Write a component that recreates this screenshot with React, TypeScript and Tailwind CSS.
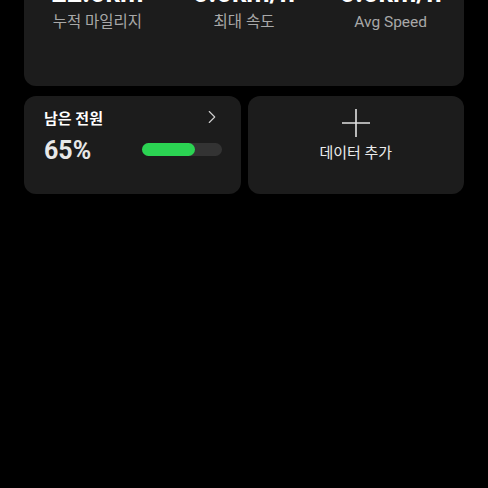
import { ChevronRight } from 'lucide-react'

const stats = [
  { value: '22.0km', label: '누적 마일리지' },
  { value: '0.0km/h', label: '최대 속도' },
  { value: '0.0km/h', label: 'Avg Speed' },
]

export default function App() {
  const battery = 65

  return (
    <div
      className="w-[488px] h-[488px] bg-black overflow-hidden"
      style={{ fontFamily: "Roboto, 'Noto Sans CJK KR', sans-serif" }}
    >
      <div className="px-[24px] -mt-[40px]">
        <div className="bg-[#1c1c1c] rounded-[12px] pt-[18px] pb-[54px] grid grid-cols-3">
          {stats.map((s, i) => (
            <div key={i} className="flex flex-col items-center">
              <span className="text-[27px] leading-[30px] font-bold text-white">{s.value}</span>
              <span className="mt-[4px] text-[15.5px] leading-[20px] text-[#a8a8a8]">{s.label}</span>
            </div>
          ))}
        </div>

        <div className="mt-[10px] grid grid-cols-2 gap-[7px]">
          <div className="relative bg-[#1c1c1c] rounded-[12px] h-[98px] px-[20px] pt-[13px]">
            <ChevronRight
              className="absolute right-[18px] top-[10px] text-[#cfcfcf]"
              size={22}
              strokeWidth={1.2}
            />
            <div className="text-[15px] leading-[20px] font-bold text-white">남은 전원</div>
            <div className="mt-[7px] flex items-center justify-between">
              <span className="text-[25px] leading-[30px] font-bold text-[#e8e8e8]">{battery}%</span>
              <div className="w-[80px] h-[13px] rounded-full bg-[#333333] mr-[-1px] -mt-[4px]">
                <div
                  className="h-full rounded-full bg-[#2bd352]"
                  style={{ width: `${battery + 2}%` }}
                />
              </div>
            </div>
          </div>

          <div className="bg-[#1c1c1c] rounded-[12px] h-[98px] flex flex-col items-center pt-[12px]">
            <svg width="30" height="30" viewBox="0 0 30 30" className="text-[#e0e0e0]">
              <path d="M15 1v28M1 15h28" stroke="currentColor" strokeWidth="1.6" fill="none" />
            </svg>
            <span className="mt-[5px] text-[15px] leading-[20px] text-[#ececec]">데이터 추가</span>
          </div>
        </div>
      </div>
    </div>
  )
}
